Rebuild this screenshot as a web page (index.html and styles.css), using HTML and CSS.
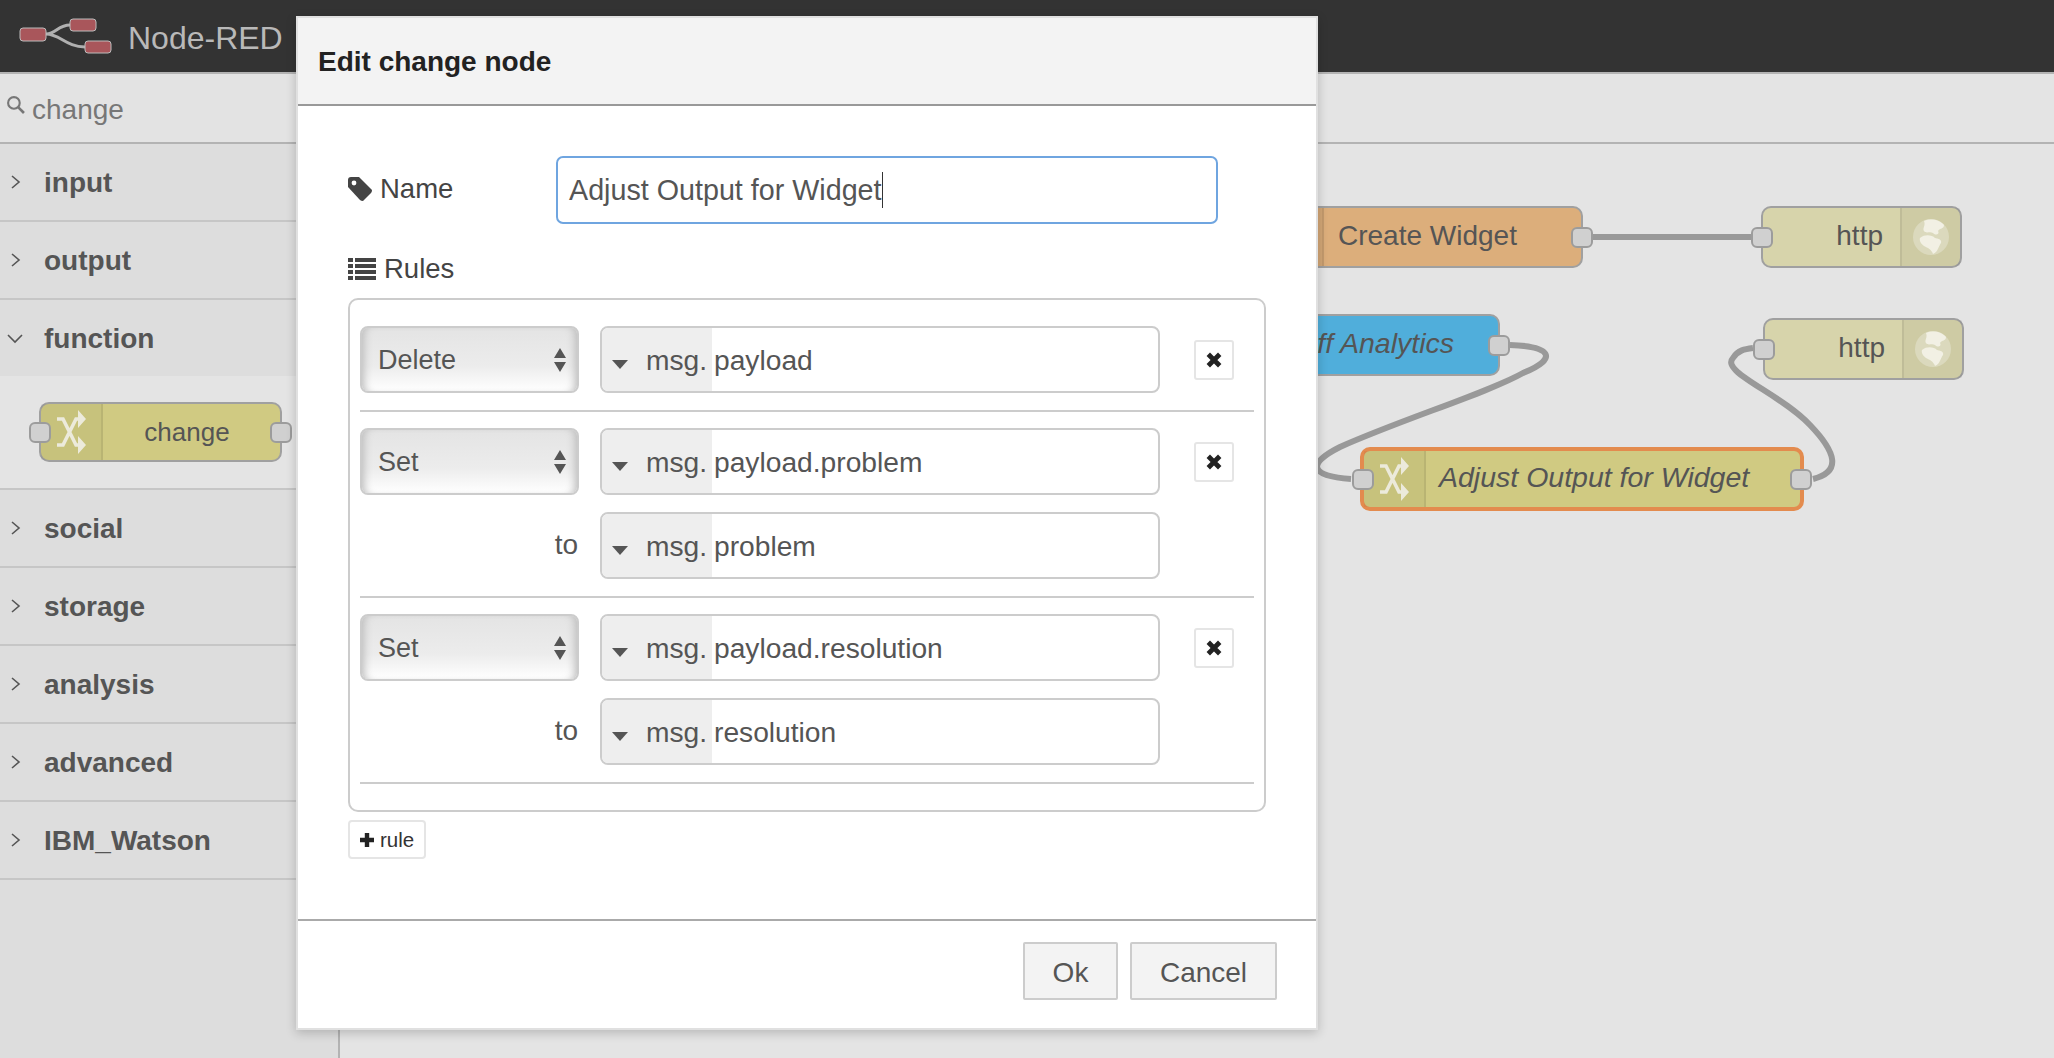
FILE: index.html
```html
<!DOCTYPE html>
<html lang="en">
<head>
  <meta charset="UTF-8">
  <title>Node-RED</title>
  <link rel="stylesheet" href="styles.css">
</head>
<body>
  <!-- Top bar -->
  <header class="topbar">
    <svg class="logo" viewBox="18 16 96 44" width="96" height="44">
      <path d="M46 36 C56 36 58 27 70 27 M46 36 C60 36 66 49 85 49" fill="none" stroke="#b0b0b0" stroke-width="3"/>
      <rect x="20" y="30" width="26" height="13" rx="3" fill="#a9565b" stroke="#bdbdbd"/>
      <rect x="70" y="21" width="26" height="12" rx="3" fill="#a9565b" stroke="#bdbdbd"/>
      <rect x="85" y="43" width="26" height="12" rx="3" fill="#a9565b" stroke="#bdbdbd"/>
    </svg>
    <span class="brand">Node-RED</span>
  </header>

  <div class="main">
    <!-- Palette -->
    <aside class="palette">
      <div class="search">
        <svg class="search-icon" viewBox="0 0 18 18" width="19" height="19">
          <circle cx="7.5" cy="7.5" r="5.5" fill="none" stroke="#777" stroke-width="2"/>
          <path d="M11.5 11.5 L17 17" stroke="#777" stroke-width="2.5"/>
        </svg>
        <span>change</span>
      </div>
      <div class="cat"><svg class="chev" viewBox="0 0 12 14" width="12" height="14"><path d="M2 1 L9 7 L2 13" fill="none" stroke="#555" stroke-width="1.6"/></svg>input</div>
      <div class="cat"><svg class="chev" viewBox="0 0 12 14" width="12" height="14"><path d="M2 1 L9 7 L2 13" fill="none" stroke="#555" stroke-width="1.6"/></svg>output</div>
      <div class="cat cat-open"><svg class="chev" viewBox="0 0 16 12" width="16" height="12"><path d="M1 2 L8 9 L15 2" fill="none" stroke="#555" stroke-width="1.6"/></svg>function</div>
      <div class="cat-body">
        <div class="node node-fn node-palette">
          <span class="port port-in"></span>
          <span class="node-icon">
            <svg class="shuffle" viewBox="0 0 30 46" width="30" height="46"><path d="M1 10 H7 L20 36 H24 M1 36 H7 L20 10 H24" fill="none" stroke="#eceadb" stroke-width="3.6"/><path d="M22 1 L30 10 L22 19 Z M22 27 L30 36 L22 45 Z" fill="#eceadb"/></svg>
          </span>
          <span class="node-label label-center">change</span>
          <span class="port port-out"></span>
        </div>
      </div>
      <div class="cat"><svg class="chev" viewBox="0 0 12 14" width="12" height="14"><path d="M2 1 L9 7 L2 13" fill="none" stroke="#555" stroke-width="1.6"/></svg>social</div>
      <div class="cat"><svg class="chev" viewBox="0 0 12 14" width="12" height="14"><path d="M2 1 L9 7 L2 13" fill="none" stroke="#555" stroke-width="1.6"/></svg>storage</div>
      <div class="cat"><svg class="chev" viewBox="0 0 12 14" width="12" height="14"><path d="M2 1 L9 7 L2 13" fill="none" stroke="#555" stroke-width="1.6"/></svg>analysis</div>
      <div class="cat"><svg class="chev" viewBox="0 0 12 14" width="12" height="14"><path d="M2 1 L9 7 L2 13" fill="none" stroke="#555" stroke-width="1.6"/></svg>advanced</div>
      <div class="cat"><svg class="chev" viewBox="0 0 12 14" width="12" height="14"><path d="M2 1 L9 7 L2 13" fill="none" stroke="#555" stroke-width="1.6"/></svg>IBM_Watson</div>
    </aside>

    <!-- Workspace -->
    <section class="workspace">
      <div class="tabs"></div>
      <div class="canvas">
        <svg class="wires" viewBox="340 144 1714 914" width="1714" height="914">
          <path d="M1592 237 H1751" />
          <path d="M1510 345 C1550 346 1560 358 1523 373 C1490 392 1400 420 1340 447 C1306 464 1310 476 1351 479" />
          <path d="M1813 479 C1842 472 1836 452 1810 425 C1780 393 1720 372 1733 358 C1738 350 1745 349 1753 348" />
        </svg>

        <div class="node node-orange n-create">
          <span class="node-icon"></span>
          <span class="node-label">Create Widget</span>
          <span class="port port-out"></span>
        </div>

        <div class="node node-http n-http1">
          <span class="port port-in"></span>
          <span class="node-label label-right">http</span>
          <span class="node-icon icon-right">
            <svg class="globe" viewBox="0 0 40 40" width="40" height="40"><circle cx="20" cy="20" r="18" fill="#eceadb" opacity=".45"/><path d="M13 4 C20 1 29 3 33 8 C33 12 29 11 27 14 C29 17 25 19 22 16 C19 14 15 17 13 14 C11 11 15 9 13 4 Z M9 21 C14 17 21 18 24 21 C27 22 31 22 30 26 C27 30 27 35 22 37 C20 32 17 31 13 29 C10 27 8 24 9 21 Z" fill="#f4f3e8" opacity=".9"/></svg>
          </span>
        </div>

        <div class="node node-blue n-analytics">
          <span class="node-icon"></span>
          <span class="node-label label-right label-italic">ff Analytics</span>
          <span class="port port-out"></span>
        </div>

        <div class="node node-http n-http2">
          <span class="port port-in"></span>
          <span class="node-label label-right">http</span>
          <span class="node-icon icon-right">
            <svg class="globe" viewBox="0 0 40 40" width="40" height="40"><circle cx="20" cy="20" r="18" fill="#eceadb" opacity=".45"/><path d="M13 4 C20 1 29 3 33 8 C33 12 29 11 27 14 C29 17 25 19 22 16 C19 14 15 17 13 14 C11 11 15 9 13 4 Z M9 21 C14 17 21 18 24 21 C27 22 31 22 30 26 C27 30 27 35 22 37 C20 32 17 31 13 29 C10 27 8 24 9 21 Z" fill="#f4f3e8" opacity=".9"/></svg>
          </span>
        </div>

        <div class="node node-fn node-selected n-adjust">
          <span class="port port-in"></span>
          <span class="node-icon">
            <svg class="shuffle" viewBox="0 0 30 46" width="30" height="46"><path d="M1 10 H7 L20 36 H24 M1 36 H7 L20 10 H24" fill="none" stroke="#eceadb" stroke-width="3.6"/><path d="M22 1 L30 10 L22 19 Z M22 27 L30 36 L22 45 Z" fill="#eceadb"/></svg>
          </span>
          <span class="node-label label-italic">Adjust Output for Widget</span>
          <span class="port port-out"></span>
        </div>
      </div>
    </section>
  </div>

  <!-- Edit dialog -->
  <div class="dialog">
    <div class="dialog-title">Edit change node</div>

    <div class="dialog-body">
      <div class="name-row">
        <label class="field-label">
          <svg viewBox="0 0 24 24" width="24" height="24"><path d="M0 3 Q0 0 3 0 H11 L24 13 Q24 15 23 16 L15 24 Q13 24 12 23 L0 10 Z" fill="#444"/><circle cx="6" cy="6" r="2.4" fill="#fff"/></svg>
          Name
        </label>
        <div class="text-input">Adjust Output for Widget<span class="caret"></span></div>
      </div>

      <div class="rules-label">
        <svg viewBox="0 0 28 22" width="28" height="22"><path d="M0 0 H5 V4 H0 Z M7 0 H28 V4 H7 Z M0 6 H5 V10 H0 Z M7 6 H28 V10 H7 Z M0 12 H5 V16 H0 Z M7 12 H28 V16 H7 Z M0 18 H5 V22 H0 Z M7 18 H28 V22 H7 Z" fill="#444"/></svg>
        Rules
      </div>

      <div class="rules">
        <div class="rule">
          <div class="rule-line">
            <div class="select">Delete
              <svg class="updown" viewBox="0 0 12 24" width="12" height="24"><path d="M6 0 L12 10 H0 Z M0 14 H12 L6 24 Z" fill="#555"/></svg>
            </div>
            <div class="typed">
              <div class="typed-prefix"><span class="drop"></span>msg.</div>
              <div class="typed-value">payload</div>
            </div>
            <button class="del"><svg viewBox="0 0 14 14" width="16" height="16"><path d="M2 2 L12 12 M12 2 L2 12" stroke="#222" stroke-width="4.2"/></svg></button>
          </div>
        </div>

        <div class="rule">
          <div class="rule-line">
            <div class="select">Set
              <svg class="updown" viewBox="0 0 12 24" width="12" height="24"><path d="M6 0 L12 10 H0 Z M0 14 H12 L6 24 Z" fill="#555"/></svg>
            </div>
            <div class="typed">
              <div class="typed-prefix"><span class="drop"></span>msg.</div>
              <div class="typed-value">payload.problem</div>
            </div>
            <button class="del"><svg viewBox="0 0 14 14" width="16" height="16"><path d="M2 2 L12 12 M12 2 L2 12" stroke="#222" stroke-width="4.2"/></svg></button>
          </div>
          <div class="rule-line">
            <div class="to">to</div>
            <div class="typed">
              <div class="typed-prefix"><span class="drop"></span>msg.</div>
              <div class="typed-value">problem</div>
            </div>
          </div>
        </div>

        <div class="rule">
          <div class="rule-line">
            <div class="select">Set
              <svg class="updown" viewBox="0 0 12 24" width="12" height="24"><path d="M6 0 L12 10 H0 Z M0 14 H12 L6 24 Z" fill="#555"/></svg>
            </div>
            <div class="typed">
              <div class="typed-prefix"><span class="drop"></span>msg.</div>
              <div class="typed-value">payload.resolution</div>
            </div>
            <button class="del"><svg viewBox="0 0 14 14" width="16" height="16"><path d="M2 2 L12 12 M12 2 L2 12" stroke="#222" stroke-width="4.2"/></svg></button>
          </div>
          <div class="rule-line">
            <div class="to">to</div>
            <div class="typed">
              <div class="typed-prefix"><span class="drop"></span>msg.</div>
              <div class="typed-value">resolution</div>
            </div>
          </div>
        </div>
      </div>

      <button class="add-rule">
        <svg viewBox="0 0 16 16" width="16" height="16"><path d="M8 1 V15 M1 8 H15" stroke="#222" stroke-width="4.4"/></svg>
        rule
      </button>
    </div>

    <div class="dialog-footer">
      <button class="btn btn-ok">Ok</button>
      <button class="btn btn-cancel">Cancel</button>
    </div>
  </div>
</body>
</html>
```

FILE: styles.css
```css
* { box-sizing: border-box; }
html, body { height: 100%; }
body {
  margin: 0;
  display: flex;
  flex-direction: column;
  overflow: hidden;
  font-family: "Liberation Sans", Arial, sans-serif;
  font-size: 28px;
  color: #555;
  background: #e4e4e4;
}
button { font-family: inherit; cursor: pointer; }

/* top bar */
.topbar {
  height: 74px;
  flex: none;
  display: flex;
  align-items: center;
  padding-left: 18px;
  background: #333;
  border-bottom: 2px solid #b3b3b3;
}
.logo { display: block; }
.brand { margin-left: 14px; padding-top: 5px; font-size: 32px; color: #b9b9b9; }

.main { flex: 1; display: flex; min-height: 0; }

/* palette */
.palette {
  width: 340px;
  flex: none;
  background: #ddd;
  border-right: 2px solid #b3b3b3;
}
.search {
  height: 70px;
  display: flex;
  align-items: center;
  padding: 4px 0 0 6px;
  background: #e3e3e3;
  border-bottom: 2px solid #b3b3b3;
  color: #777;
}
.search-icon { margin: -12px 7px 0 0; }
.cat {
  height: 78px;
  display: flex;
  align-items: center;
  position: relative;
  padding: 1px 0 0 44px;
  font-size: 28px;
  font-weight: bold;
  border-bottom: 2px solid #c6c6c6;
}
.chev { position: absolute; left: 10px; top: 31px; }
.cat-open { height: 76px; border-bottom: 0; }
.cat-open .chev { left: 7px; top: 33px; }
.cat-body {
  height: 114px;
  padding: 26px 0 0 39px;
  background: #e4e4e4;
  border-bottom: 2px solid #c6c6c6;
}

/* flow nodes */
.node {
  display: flex;
  align-items: stretch;
  position: relative;
  height: 62px;
  border: 2px solid #a0a0a0;
  border-radius: 10px;
}
.node-fn { background: #d0ca82; }
.node-http { background: #d7d4ab; }
.node-orange { background: #dcae7b; }
.node-blue { background: #50aedb; }
.node-selected { border: 4px solid #e38b4e; }
.node-palette { width: 243px; height: 60px; }
.node-icon {
  width: 62px;
  flex: none;
  display: flex;
  align-items: center;
  justify-content: center;
  background: rgba(0, 0, 0, .04);
  border-right: 2px solid rgba(0, 0, 0, .07);
}
.icon-right { width: 60px; border-right: 0; border-left: 2px solid rgba(0, 0, 0, .07); }
.shuffle, .globe { filter: blur(.5px); }
.node-label {
  flex: 1;
  display: flex;
  align-items: center;
  padding: 0 14px 3px;
  white-space: nowrap;
}
.label-center { justify-content: center; font-size: 26px; padding: 0 9px 0 0; }
.label-right { justify-content: flex-end; padding: 0 17px 3px 0; }
.label-italic { font-style: italic; font-size: 28.5px; }
.n-adjust .label-italic { padding-left: 13px; }
.port {
  position: absolute;
  top: 50%;
  width: 22px;
  height: 21px;
  margin-top: -10.5px;
  background: #d0d0d0;
  border: 2px solid #9c9c9c;
  border-radius: 6px;
  z-index: 1;
}
.port-in { left: -12px; }
.port-out { right: -12px; }

/* workspace */
.workspace { flex: 1; display: flex; flex-direction: column; position: relative; }
.tabs { height: 70px; flex: none; border-bottom: 2px solid #b3b3b3; }
.canvas { flex: 1; position: relative; }
.wires { position: absolute; left: 0; top: 0; }
.wires path { fill: none; stroke: #999; stroke-width: 6; }

.n-create { position: absolute; left: 920px; top: 62px; width: 323px; }
.n-http1 { position: absolute; left: 1421px; top: 62px; width: 201px; }
.n-analytics { position: absolute; left: 880px; top: 170px; width: 280px; }
.n-analytics .label-right { padding-right: 44px; }
.n-http2 { position: absolute; left: 1423px; top: 174px; width: 201px; }
.n-adjust { position: absolute; left: 1020px; top: 303px; width: 444px; height: 64px; }

/* dialog */
.dialog {
  position: absolute;
  left: 296px;
  top: 16px;
  width: 1022px;
  height: 1014px;
  display: flex;
  flex-direction: column;
  background: #fff;
  border: 2px solid #e0e0e0;
  box-shadow: 0 3px 10px rgba(0, 0, 0, .2);
  z-index: 5;
}
.dialog-title {
  height: 88px;
  flex: none;
  display: flex;
  align-items: center;
  padding: 2px 0 0 20px;
  background: #f3f3f3;
  border-bottom: 2px solid #999;
  font-weight: bold;
  color: #222;
}
.dialog-body { flex: 1; padding: 50px 0 0 50px; }
.name-row { display: flex; align-items: center; }
.field-label {
  width: 208px;
  display: flex;
  align-items: center;
  gap: 8px;
  margin-top: -2px;
  font-size: 27.5px;
  color: #444;
}
.text-input {
  width: 662px;
  height: 68px;
  display: flex;
  align-items: center;
  padding-left: 11px;
  border: 2px solid #6fa5e0;
  border-radius: 7px;
  color: #555;
  font-size: 28.7px;
}
.caret { width: 1.5px; height: 36px; background: #333; }

.rules-label {
  height: 34px;
  margin: 27px 0 13px;
  display: flex;
  align-items: center;
  gap: 8px;
  padding-top: 2px;
  font-size: 27.5px;
  color: #444;
}
.rules {
  width: 918px;
  height: 514px;
  padding: 26px 10px 0;
  border: 2px solid #ccc;
  border-radius: 10px;
}
.rule {
  display: flex;
  flex-direction: column;
  gap: 17px;
  padding-bottom: 17px;
  margin-bottom: 16px;
  border-bottom: 2px solid #ccc;
}
.rule-line { display: flex; align-items: center; }
.select {
  width: 219px;
  height: 67px;
  flex: none;
  display: flex;
  align-items: center;
  justify-content: space-between;
  padding: 2px 11px 0 16px;
  border: 2px solid #ccc;
  border-radius: 8px;
  background: linear-gradient(#e4e4e4, #ececec 60%, #fff);
  box-shadow: inset 8px 0 8px -6px #bbb, inset -8px 0 8px -6px #bbb;
  font-size: 27px;
}
.updown { margin-top: -2px; }
.to { width: 219px; flex: none; text-align: right; margin-top: -2px; padding-right: 1px; }
.typed {
  width: 560px;
  height: 67px;
  flex: none;
  display: flex;
  margin-left: 21px;
  border: 2px solid #ccc;
  border-radius: 8px;
  overflow: hidden;
  font-size: 28.2px;
}
.typed-prefix {
  width: 110px;
  flex: none;
  display: flex;
  align-items: center;
  padding: 2px 0 0 10px;
  background: #eee;
}
.drop {
  margin: 8px 18px 0 0;
  border-top: 9px solid #555;
  border-left: 8px solid transparent;
  border-right: 8px solid transparent;
}
.typed-value { display: flex; align-items: center; padding: 2px 0 0 2px; }
.del {
  width: 40px;
  height: 40px;
  flex: none;
  margin-left: 34px;
  padding: 0;
  display: flex;
  align-items: center;
  justify-content: center;
  background: #fff;
  border: 2px solid #e5e5e5;
  border-radius: 3px;
}
.add-rule {
  width: 78px;
  height: 39px;
  margin-top: 8px;
  padding: 0 0 0 9px;
  display: flex;
  align-items: center;
  gap: 5px;
  background: #fff;
  border: 2px solid #e5e5e5;
  border-radius: 4px;
  font-size: 20.5px;
  color: #333;
}

.dialog-footer {
  height: 109px;
  flex: none;
  display: flex;
  justify-content: flex-end;
  align-items: flex-start;
  gap: 12px;
  padding: 21px 39px 0 0;
  border-top: 2px solid #aaa;
}
.btn {
  height: 58px;
  padding: 3px 0 0;
  background: #f3f3f3;
  border: 2px solid #ccc;
  border-radius: 2px;
  font-size: 28px;
  color: #555;
}
.btn-ok { width: 95px; }
.btn-cancel { width: 147px; }
```
